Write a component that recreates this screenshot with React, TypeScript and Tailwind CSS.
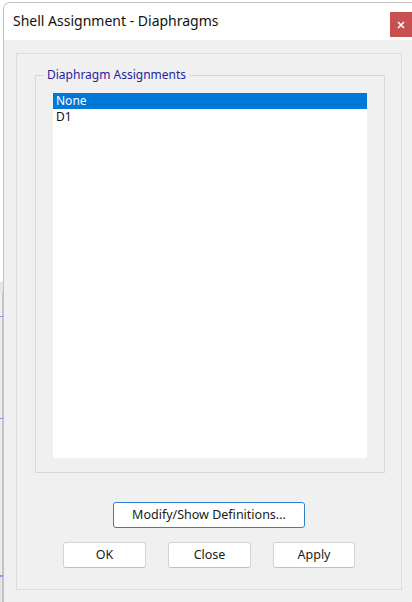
import React from "react";

const font = { fontFamily: '"Noto Sans", "Open Sans", sans-serif' };

function Btn({ label, w, primary }: { label: string; w: string; primary?: boolean }) {
  return (
    <div
      className={`${w} h-[26px] flex items-center justify-center bg-white rounded-[3px] text-[12.5px] text-[#1a1a1a] ${
        primary ? "border border-[#2f7fd1]" : "border border-[#d3d3d3] border-b-[#c2c2c2]"
      }`}
    >
      {label}
    </div>
  );
}

export default function App() {
  return (
    <div className="w-[412px] h-[602px] flex bg-white overflow-hidden" style={font}>
      {/* outside strip */}
      <div className="w-[3px] h-full flex flex-col">
        <div className="h-[282px] bg-white" />
        <div className="h-[10px] bg-[#e6e6e6]" />
        <div className="h-[24px] bg-[#efefef] border-r border-[#c4c4c4]" />
        <div className="h-[1px] bg-[#8c9ad6]" />
        <div className="h-[101px] bg-[#ececec] border-r border-[#c4c4c4]" />
        <div className="h-[1px] bg-[#8c9ad6]" />
        <div className="h-[156px] bg-[#ececec] border-r border-[#c4c4c4]" />
        <div className="h-[2px] bg-[#8c9ad6]" />
        <div className="flex-1 bg-[#e4e4e4] border-r border-[#c4c4c4]" />
      </div>
      {/* window */}
      <div className="flex-1 mt-[2px] border-l border-t border-[#c3c3c3] rounded-tl-[7px] flex flex-col overflow-hidden">
        <div className="h-[37px] bg-white flex items-start">
          <div className="flex-1 pl-[9px] pt-[7px] text-[14px] text-[#111]">Shell Assignment - Diaphragms</div>
          <div className="mt-[9px] w-[22px] h-[25px] bg-[#c75050] flex items-center justify-center">
            <svg width="8" height="8" viewBox="0 0 8 8">
              <path d="M1 1L7 7M7 1L1 7" stroke="white" strokeWidth="1.6" />
            </svg>
          </div>
        </div>
        <div className="flex-1 bg-[#f0f0f0] pt-[13px] pl-[12px] pr-[10px] pb-[12px] flex">
          <div className="flex-1 border border-[#dcdcdc] flex flex-col items-center">
            <div className="self-stretch mt-[21px] ml-[18px] mr-[16px] h-[398px] border border-[#d8d8d8] relative pt-[17px] px-[17px] pb-[14px] flex">
              <div className="absolute -top-[9px] left-[8px] px-[3px] bg-[#f0f0f0] text-[12px] leading-[16px] text-[#1f1fa0]">
                Diaphragm Assignments
              </div>
              <div className="flex-1 bg-white text-[12px] leading-[16px]">
                <div className="h-[16px] bg-[#0078d7] text-white pl-[3px]">None</div>
                <div className="h-[16px] text-[#111] pl-[3px]">D1</div>
              </div>
            </div>
            <div className="mt-[29px]">
              <Btn label="Modify/Show Definitions..." w="w-[192px]" primary />
            </div>
            <div className="mt-[14px] flex gap-[22px]">
              <Btn label="OK" w="w-[83px]" />
              <Btn label="Close" w="w-[83px]" />
              <Btn label="Apply" w="w-[82px]" />
            </div>
          </div>
        </div>
      </div>
    </div>
  );
}
